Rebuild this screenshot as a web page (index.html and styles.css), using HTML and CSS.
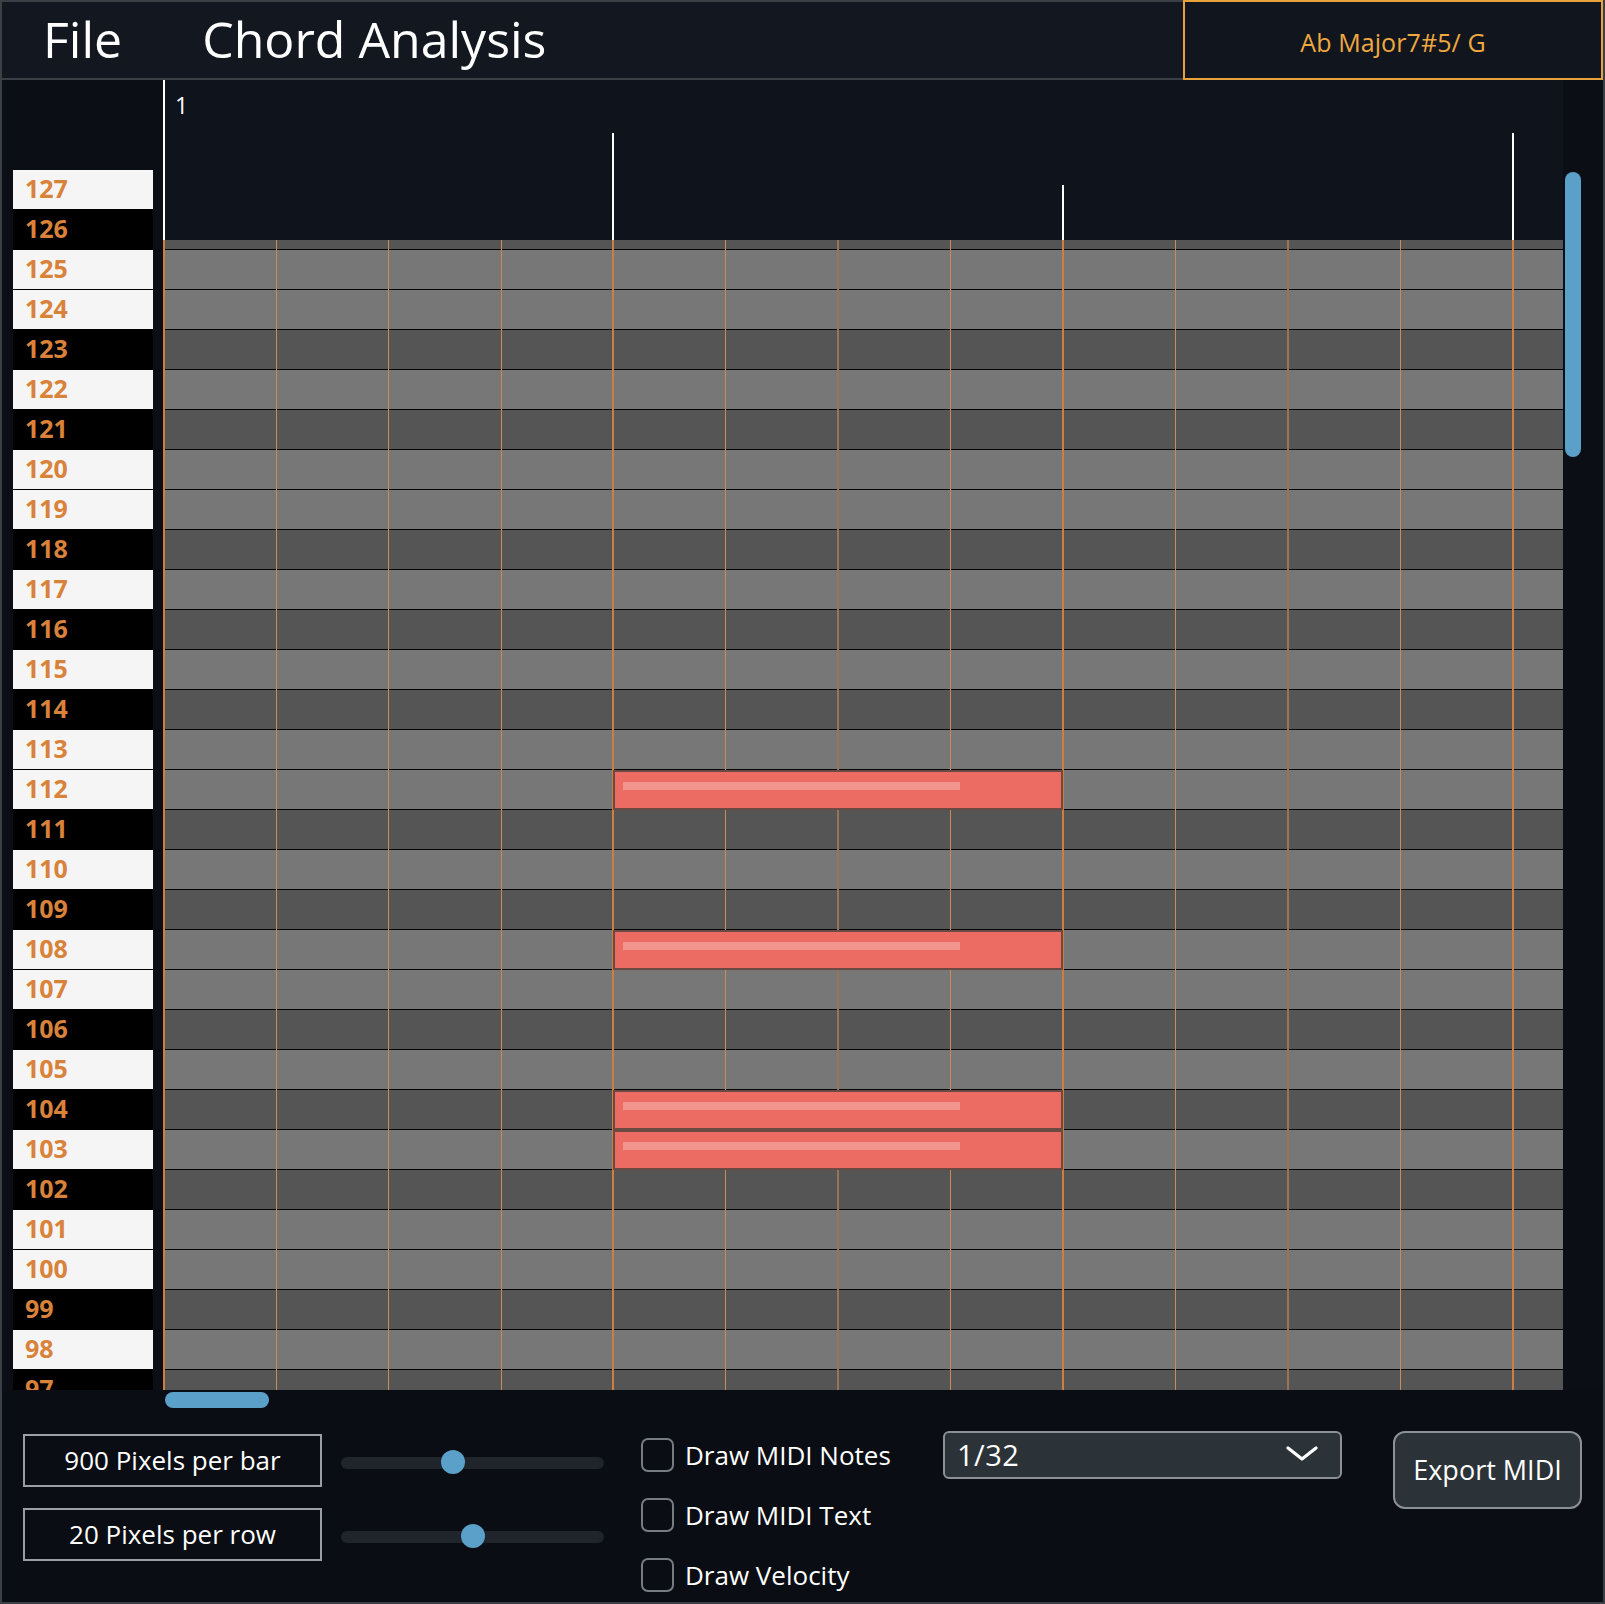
FILE: index.html
```html
<!DOCTYPE html>
<html>
<head>
<meta charset="utf-8">
<title>Chord Analysis</title>
<link rel="stylesheet" href="styles.css">
</head>
<body>
<div class="app">
  <header class="topbar">
    <nav class="menu">
      <span class="menu-item file">File</span>
      <span class="menu-item">Chord Analysis</span>
    </nav>
    <div class="chord-box">Ab Major7#5/ G</div>
  </header>

  <main class="main">
    <div class="keys">
      <div class="key w">127</div><div class="key b">126</div><div class="key w">125</div><div class="key w">124</div>
      <div class="key b">123</div><div class="key w">122</div><div class="key b">121</div><div class="key w">120</div>
      <div class="key w">119</div><div class="key b">118</div><div class="key w">117</div><div class="key b">116</div>
      <div class="key w">115</div><div class="key b">114</div><div class="key w">113</div><div class="key w">112</div>
      <div class="key b">111</div><div class="key w">110</div><div class="key b">109</div><div class="key w">108</div>
      <div class="key w">107</div><div class="key b">106</div><div class="key w">105</div><div class="key b">104</div>
      <div class="key w">103</div><div class="key b">102</div><div class="key w">101</div><div class="key w">100</div>
      <div class="key b">99</div><div class="key w">98</div><div class="key b">97</div>
    </div>

    <div class="roll">
      <div class="timeline">
        <span class="bar-num">1</span>
        <i class="tick" style="left:0;top:0"></i>
        <i class="tick" style="left:449px;top:53px"></i>
        <i class="tick" style="left:899px;top:105px"></i>
        <i class="tick" style="left:1349px;top:53px"></i>
      </div>
      <div class="grid">
        <div class="rows">
          <div class="row w"></div><div class="row b"></div><div class="row w"></div><div class="row w"></div>
          <div class="row b"></div><div class="row w"></div><div class="row b"></div><div class="row w"></div>
          <div class="row w"></div><div class="row b"></div><div class="row w"></div><div class="row b"></div>
          <div class="row w"></div><div class="row b"></div><div class="row w"></div><div class="row w"></div>
          <div class="row b"></div><div class="row w"></div><div class="row b"></div><div class="row w"></div>
          <div class="row w"></div><div class="row b"></div><div class="row w"></div><div class="row b"></div>
          <div class="row w"></div><div class="row b"></div><div class="row w"></div><div class="row w"></div>
          <div class="row b"></div><div class="row w"></div><div class="row b"></div>
        </div>
        <i class="vline major" style="left:0"></i>
        <i class="vline minor" style="left:112.5px"></i>
        <i class="vline minor" style="left:225px"></i>
        <i class="vline minor" style="left:337.5px"></i>
        <i class="vline major" style="left:449px"></i>
        <i class="vline minor" style="left:562px"></i>
        <i class="vline half" style="left:674px"></i>
        <i class="vline minor" style="left:787px"></i>
        <i class="vline major" style="left:899px"></i>
        <i class="vline minor" style="left:1012px"></i>
        <i class="vline half" style="left:1124px"></i>
        <i class="vline minor" style="left:1237px"></i>
        <i class="vline major" style="left:1349px"></i>

        <div class="note" style="top:530px"><span class="vel" style="width:337px"></span></div>
        <div class="note" style="top:690px"><span class="vel" style="width:337px"></span></div>
        <div class="note" style="top:850px"><span class="vel" style="width:337px"></span></div>
        <div class="note" style="top:890px"><span class="vel" style="width:337px"></span></div>
      </div>
    </div>

    <div class="vscroll"><div class="vthumb"></div></div>
  </main>

  <section class="bottom">
    <div class="hscroll"><div class="hthumb"></div></div>
    <div class="controls">
      <div class="col-boxes">
        <div class="valbox">900 Pixels per bar</div>
        <div class="valbox">20 Pixels per row</div>
      </div>
      <div class="col-sliders">
        <div class="slider"><div class="track"></div><div class="thumb" style="left:100px"></div></div>
        <div class="slider"><div class="track"></div><div class="thumb" style="left:120px"></div></div>
      </div>
      <div class="col-checks">
        <label class="check"><span class="cbox"></span><span>Draw MIDI Notes</span></label>
        <label class="check"><span class="cbox"></span><span>Draw MIDI Text</span></label>
        <label class="check"><span class="cbox"></span><span>Draw Velocity</span></label>
      </div>
      <div class="dropdown">
        <span>1/32</span>
        <svg class="chev" width="32" height="16" viewBox="0 0 32 16"><path d="M2 2 L16 13 L30 2" fill="none" stroke="#ffffff" stroke-width="3.2" stroke-linecap="round" stroke-linejoin="round"/></svg>
      </div>
      <button class="export">Export MIDI</button>
    </div>
  </section>
</div>
</body>
</html>
```

FILE: styles.css
```css
* { box-sizing: border-box; }
html, body { margin: 0; padding: 0; }
body {
  background: #0a0d13;
  font-family: "Open Sans", "DejaVu Sans", sans-serif;
  color: #ffffff;
}
.app {
  width: 1605px;
  height: 1604px;
  background: #0a0d13;
  border-left: 2px solid #3b3f46;
  border-right: 2px solid #3b3f46;
  border-bottom: 2px solid #3b3f46;
  display: flex;
  flex-direction: column;
  overflow: hidden;
}

/* top bar */
.topbar {
  height: 80px;
  display: flex;
  flex: none;
}
.menu {
  flex: 1;
  display: flex;
  align-items: center;
  background: #131820;
  border-top: 2px solid #3b3f46;
  border-bottom: 2px solid #3b3f46;
  padding-left: 41px;
  gap: 80px;
}
.menu-item {
  font-size: 50px;
  line-height: 1;
  color: #ffffff;
  margin-top: -2px;
}
.chord-box {
  width: 420px;
  height: 80px;
  border: 2px solid #e9a23a;
  background: #11161e;
  color: #f0a840;
  font-size: 25px;
  display: flex;
  align-items: center;
  justify-content: center;
  padding-top: 4px;
  letter-spacing: 0.1px;
}

/* main */
.main {
  height: 1310px;
  display: flex;
  flex: none;
}
.keys {
  width: 161px;
  flex: none;
  background: #0b0e14;
  padding: 90px 10px 0 11px;
  overflow: hidden;
}
.key {
  height: 40px;
  font-weight: 700;
  font-size: 25px;
  color: #d9823a;
  display: flex;
  align-items: center;
  padding-left: 12px;
  padding-bottom: 3px;
  border-bottom: 1px solid #000;
}
.key.w { background: #f5f5f5; }
.key.b { background: #000000; }

.roll {
  width: 1400px;
  flex: none;
  display: flex;
  flex-direction: column;
}
.timeline {
  height: 160px;
  background: #0e131c;
  position: relative;
  flex: none;
}
.bar-num {
  position: absolute;
  left: 12px;
  top: 9px;
  font-size: 23px;
  color: #ffffff;
}
.tick {
  position: absolute;
  bottom: 0;
  width: 2px;
  background: #ffffff;
}
.grid {
  height: 1150px;
  position: relative;
  overflow: hidden;
  background: #555;
}
.rows { margin-top: -70px; }
.row {
  height: 40px;
  border-bottom: 1px solid #050505;
}
.row.w { background: #777777; }
.row.b { background: #555555; }

.vline {
  position: absolute;
  top: 0;
  bottom: 0;
}
.vline.major { width: 2px; background: #d07e3e; }
.vline.minor { width: 1px; background: #c98a5c; }
.vline.half { width: 2px; background: #9a7258; }

.note {
  position: absolute;
  left: 450px;
  width: 450px;
  height: 40px;
  background: #ec6b62;
  border: 2px solid #6b4a43;
  padding: 10px 0 0 8px;
}
.vel {
  display: block;
  height: 8px;
  background: #f2958f;
}

.vscroll {
  flex: 1;
  background: #0b0e15;
  padding: 92px 0 0 2px;
}
.vthumb {
  width: 16px;
  height: 285px;
  border-radius: 8px;
  background: #5ba0c8;
}

/* bottom */
.bottom {
  flex: 1;
  background: #0a0d13;
}
.hscroll {
  height: 41px;
  padding: 2px 0 0 163px;
}
.hthumb {
  width: 104px;
  height: 16px;
  border-radius: 8px;
  background: #5ba0c8;
}
.controls {
  display: flex;
  align-items: flex-start;
  padding-left: 21px;
}
.col-boxes {
  width: 299px;
  margin-top: 3px;
  display: flex;
  flex-direction: column;
  gap: 21px;
}
.valbox {
  height: 53px;
  border: 2px solid #9a9fa6;
  display: flex;
  align-items: center;
  justify-content: center;
  font-size: 26px;
  color: #fff;
  padding-bottom: 2px;
}
.col-sliders {
  width: 263px;
  margin-left: 19px;
  margin-top: 3px;
  display: flex;
  flex-direction: column;
  gap: 21px;
}
.slider {
  height: 53px;
  position: relative;
  display: flex;
  align-items: center;
}
.track {
  width: 100%;
  height: 12px;
  border-radius: 6px;
  background: #1f252b;
  margin-top: 4px;
}
.thumb {
  position: absolute;
  top: 16px;
  width: 24px;
  height: 24px;
  border-radius: 50%;
  background: #5ba0c8;
}
.col-checks {
  margin-left: 37px;
  margin-top: 7px;
  display: flex;
  flex-direction: column;
  gap: 26px;
  width: 265px;
}
.check {
  height: 34px;
  display: flex;
  align-items: center;
  gap: 11px;
  font-size: 26px;
  color: #fff;
}
.cbox {
  width: 33px;
  height: 34px;
  border: 2px solid #777c82;
  border-radius: 7px;
  flex: none;
}
.dropdown {
  width: 399px;
  height: 48px;
  margin-left: 37px;
  background: #2b3238;
  border: 2px solid #8b9197;
  border-radius: 6px;
  display: flex;
  align-items: center;
  justify-content: space-between;
  padding: 0 22px 0 12px;
  font-size: 29px;
  color: #fff;
}
.dropdown span { margin-top: -2px; letter-spacing: 0.5px; }
.chev { display: block; margin-top: -2px; }
.export {
  width: 189px;
  height: 78px;
  margin-left: 51px;
  background: #2b3238;
  border: 2px solid #8b9197;
  border-radius: 12px;
  color: #fff;
  font-family: "Open Sans", "DejaVu Sans", sans-serif;
  font-size: 27px;
  padding: 0 0 2px 0;
}
```
